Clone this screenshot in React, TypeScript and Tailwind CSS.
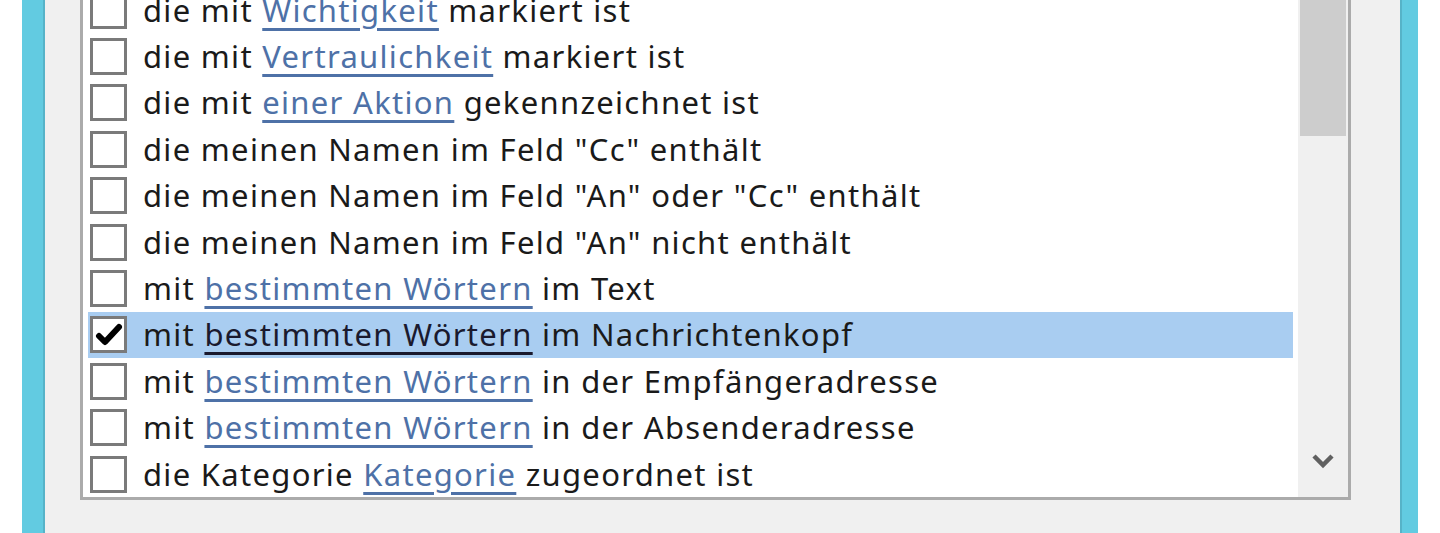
type Row = { pre: string; link?: string; post?: string; checked?: boolean }

const rows: Row[] = [
  { pre: 'die mit ', link: 'Wichtigkeit', post: ' markiert ist' },
  { pre: 'die mit ', link: 'Vertraulichkeit', post: ' markiert ist' },
  { pre: 'die mit ', link: 'einer Aktion', post: ' gekennzeichnet ist' },
  { pre: 'die meinen Namen im Feld "Cc" enthält' },
  { pre: 'die meinen Namen im Feld "An" oder "Cc" enthält' },
  { pre: 'die meinen Namen im Feld "An" nicht enthält' },
  { pre: 'mit ', link: 'bestimmten Wörtern', post: ' im Text' },
  { pre: 'mit ', link: 'bestimmten Wörtern', post: ' im Nachrichtenkopf', checked: true },
  { pre: 'mit ', link: 'bestimmten Wörtern', post: ' in der Empfängeradresse' },
  { pre: 'mit ', link: 'bestimmten Wörtern', post: ' in der Absenderadresse' },
  { pre: 'die Kategorie ', link: 'Kategorie', post: ' zugeordnet ist' },
]

function Checkbox({ checked }: { checked?: boolean }) {
  return (
    <div className="w-[37px] h-[37px] shrink-0 border-[3px] border-[#7a7a7a] bg-white flex items-center justify-center">
      {checked && (
        <svg width="28" height="26" viewBox="0 0 28 26">
          <path d="M4 14 L10 20 L24 5" fill="none" stroke="#000" strokeWidth="6" strokeLinecap="round" strokeLinejoin="round" />
        </svg>
      )}
    </div>
  )
}

export default function App() {
  return (
    <div className="h-[533px] w-[1440px] overflow-hidden flex bg-white" style={{ fontFamily: '"Noto Sans", "Open Sans", sans-serif' }}>
      <div className="w-[22px] bg-white" />
      <div className="w-[23px] bg-[#62cbe1] border-r-2 border-[#56b3c8]" />
      <div className="flex-1 bg-[#f0f0f0] pl-[35px] pr-[49px] flex flex-col">
        {/* list box */}
        <div className="-mt-[16px] border-[3px] border-[#ababab] bg-white flex">
          <div className="flex-1 pl-[5px] pr-[5px] flex flex-col">
            {rows.map((r, i) => (
              <div
                key={i}
                className={`h-[46.4px] flex items-center pl-[2px] text-[31px] tracking-[1.3px] text-[#1a1a1a] ${
                  r.checked ? 'bg-[#a9cdf1]' : ''
                }`}
              >
                <Checkbox checked={r.checked} />
                <span className="ml-[16px] whitespace-pre leading-none">
                  {r.pre}
                  {r.link && (
                    <span
                      className={`underline decoration-[3px] underline-offset-[6px] ${
                        r.checked ? 'text-[#1a1a2e] decoration-[#1a1a2e]' : 'text-[#4e71a7] decoration-[#4e71a7]'
                      }`}
                    >
                      {r.link}
                    </span>
                  )}
                  {r.post}
                </span>
              </div>
            ))}
          </div>
          {/* scrollbar */}
          <div className="w-[50px] bg-[#f0f0f0] flex flex-col items-center">
            <div className="w-[46px] h-[149px] bg-[#cdcdcd]" />
            <div className="flex-1" />
            <div className="h-[44px] mb-[14px] flex items-center justify-center">
              <svg width="24" height="16" viewBox="0 0 24 16">
                <path d="M3 3 L12 12 L21 3" fill="none" stroke="#606060" strokeWidth="4.5" />
              </svg>
            </div>
          </div>
        </div>
      </div>
      <div className="w-[18px] bg-[#62cbe1] border-l-2 border-[#56b3c8]" />
      <div className="w-[22px] bg-white" />
    </div>
  )
}
